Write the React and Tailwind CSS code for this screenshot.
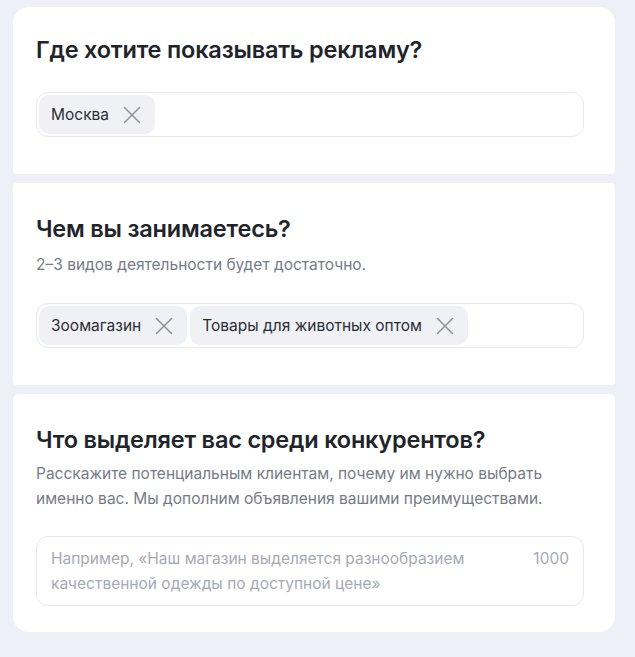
const CloseIcon = () => (
  <svg width="18" height="18" viewBox="0 0 18 18" fill="none" className="ml-[14px] text-[#8d929c]">
    <path d="M1.5 1.5L16.5 16.5M16.5 1.5L1.5 16.5" stroke="currentColor" strokeWidth="1.5" strokeLinecap="round" />
  </svg>
);

const Chip = ({ label }) => (
  <div className="flex h-[39px] items-center rounded-[10px] bg-[#eff1f5] pl-3 pr-[14px]">
    <span className="text-[15.5px] text-[#2b2e35]">{label}</span>
    <CloseIcon />
  </div>
);

const ChipInput = ({ items }) => (
  <div className="flex h-[45px] items-center gap-[3px] rounded-xl border border-[#e6e8ed] px-[2px]">
    {items.map((item) => (
      <Chip key={item} label={item} />
    ))}
  </div>
);

const App = () => {
  return (
    <div className="min-h-screen bg-[#edf0f7] pl-[13px] pr-5 pt-[7px] font-['Inter',sans-serif]">
      <div className="flex w-[602px] flex-col gap-[9px]">
        {/* Регион */}
        <div className="rounded-t-2xl rounded-b-[4px] bg-white pb-[37px] pl-[23px] pr-[31px] pt-[29px]">
          <h2 className="text-[23.5px] font-semibold leading-7 tracking-[-0.2px] text-[#21242b]">
            Где хотите показывать рекламу?
          </h2>
          <div className="mt-7">
            <ChipInput items={['Москва']} />
          </div>
        </div>

        {/* Деятельность */}
        <div className="rounded-[4px] bg-white pb-[37px] pl-[23px] pr-[31px] pt-8">
          <h2 className="text-[23.5px] font-semibold leading-7 tracking-[-0.2px] text-[#21242b]">
            Чем вы занимаетесь?
          </h2>
          <p className="mt-3 text-[15.5px] leading-5 text-[#767b86]">
            2–3 видов деятельности будет достаточно.
          </p>
          <div className="mt-7">
            <ChipInput items={['Зоомагазин', 'Товары для животных оптом']} />
          </div>
        </div>

        {/* Преимущества */}
        <div className="rounded-t-[6px] rounded-b-2xl bg-white pb-[26px] pl-[23px] pr-[31px] pt-8">
          <h2 className="text-[23.5px] font-semibold leading-7 tracking-[-0.2px] text-[#21242b]">
            Что выделяет вас среди конкурентов?
          </h2>
          <p className="mt-[7px] text-[15.5px] leading-[25px] text-[#767b86]">
            Расскажите потенциальным клиентам, почему им нужно выбрать именно вас. Мы дополним
            объявления вашими преимуществами.
          </p>
          <div className="mt-[25px] flex h-[70px] justify-between rounded-xl border border-[#e6e8ed] px-[14px] pt-[9px]">
            <span className="w-[440px] text-[15.5px] leading-[25px] text-[#a6aab3]">
              Например, «Наш магазин выделяется разнообразием качественной одежды по доступной
              цене»
            </span>
            <span className="text-[15.5px] leading-[25px] text-[#a6aab3]">1000</span>
          </div>
        </div>
      </div>
    </div>
  );
};

export default App;
